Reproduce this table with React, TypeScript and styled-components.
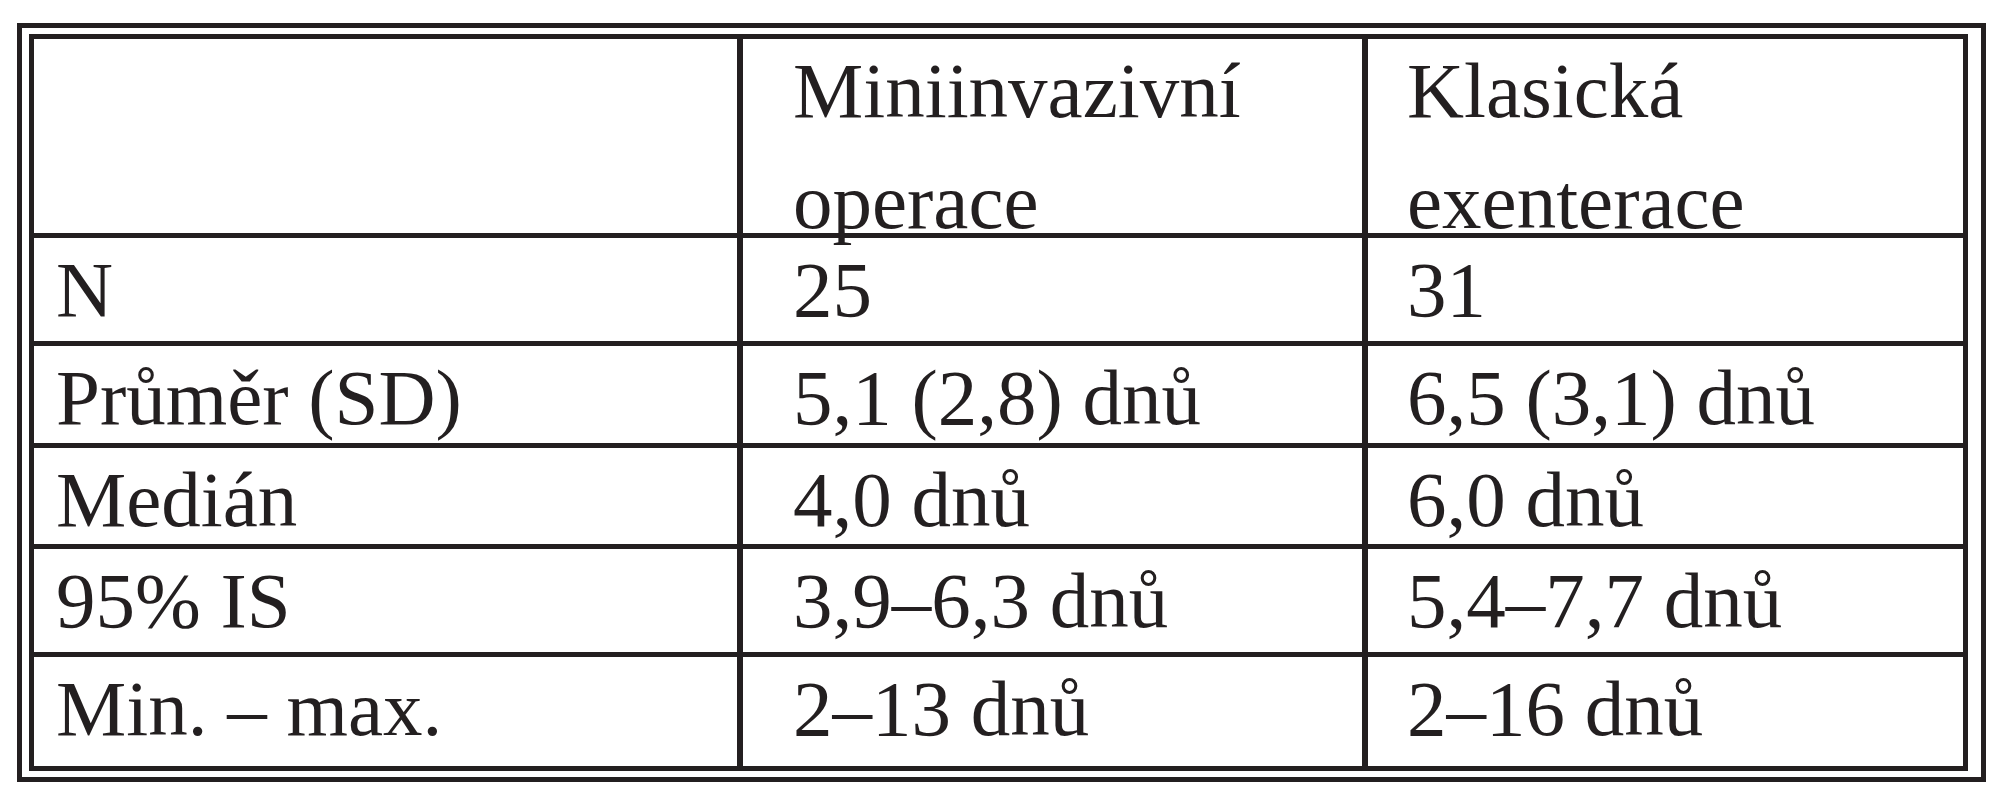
import React from "react";
import styled, { createGlobalStyle } from "styled-components";

const Global = createGlobalStyle`
  html, body { margin: 0; padding: 0; background: #ffffff; }
  body { font-family: "Liberation Serif", "Times New Roman", serif; }
`;

const Frame = styled.div`
  box-sizing: border-box;
  margin: 23px 0 0 17px;
  width: 1969px;
  height: 759px;
  border: 5px solid #231f20;
  padding: 6px 13px 6px 7px;
`;

const Table = styled.div`
  box-sizing: border-box;
  display: grid;
  grid-template-columns: 703px 619px 595px;
  grid-template-rows: 194px 103px 97px 96px 103px 109px;
  column-gap: 6px;
  row-gap: 5px;
  padding: 5px;
  width: 1939px;
  height: 737px;
  background: #231f20;
`;

const Cell = styled.div<{ $pad: number; $head?: boolean }>`
  background: #ffffff;
  color: #231f20;
  font-family: "Liberation Serif", "Times New Roman", serif;
  font-size: 79px;
  line-height: ${(p) => (p.$head ? "111px" : "88px")};
  padding: ${(p) => (p.$head ? "0" : "8px")} 0 0 ${(p) => p.$pad}px;
  white-space: nowrap;
  overflow: visible;
  position: relative;
  z-index: ${(p) => (p.$head ? 2 : 1)};
`;

const HeadText = styled.span`
  display: block;
  margin-top: -4px;
`;

const pads = [22, 50, 39];

const rows: string[][] = [
  ["N", "25", "31"],
  ["Průměr (SD)", "5,1 (2,8) dnů", "6,5 (3,1) dnů"],
  ["Medián", "4,0 dnů", "6,0 dnů"],
  ["95% IS", "3,9–6,3 dnů", "5,4–7,7 dnů"],
  ["Min. – max.", "2–13 dnů", "2–16 dnů"],
];

export default function App() {
  return (
    <>
      <Global />
      <Frame>
        <Table>
          <Cell $pad={pads[0]} $head />
          <Cell $pad={pads[1]} $head>
            <HeadText>
              Miniinvazivní
              <br />
              operace
            </HeadText>
          </Cell>
          <Cell $pad={pads[2]} $head>
            <HeadText>
              Klasická
              <br />
              exenterace
            </HeadText>
          </Cell>
          {rows.map((r, i) =>
            r.map((t, j) => (
              <Cell key={`${i}-${j}`} $pad={pads[j]}>
                {t}
              </Cell>
            ))
          )}
        </Table>
      </Frame>
    </>
  );
}
